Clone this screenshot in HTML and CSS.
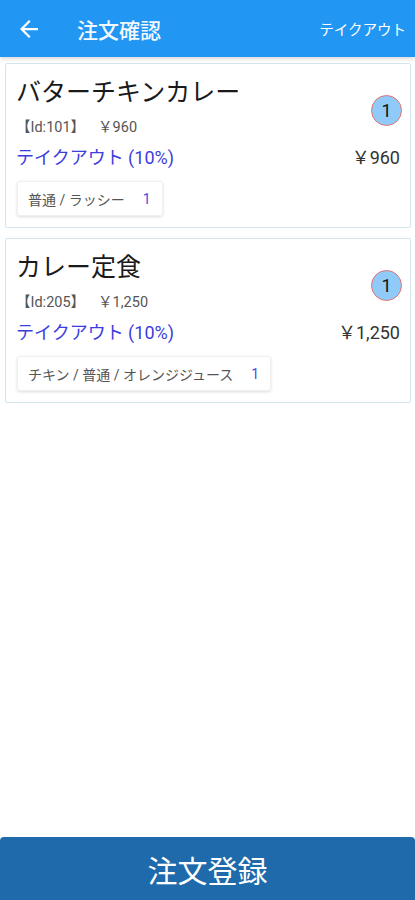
FILE: index.html
```html
<!DOCTYPE html>
<html lang="ja">
<head>
    <meta charset="UTF-8">
    <title>注文確認</title>
    <link rel="stylesheet" href="styles.css">
</head>
<body>
    <div id="app">
        <div class="header">
            <span class="back">
                <svg width="18" height="18" viewBox="4 4 16 16">
                    <path d="M20 11H7.83l5.59-5.59L12 4l-8 8 8 8 1.41-1.41L7.83 13H20v-2z" fill="#fff"/>
                </svg>
            </span>
            <span class="title">注文確認</span>
            <span class="mode">テイクアウト</span>
        </div>
        <div class="list">
            <div class="card">
                <div class="top">
                    <div class="info">
                        <div class="name">バターチキンカレー</div>
                        <div class="id">【Id:101】<span class="unit">￥960</span></div>
                    </div>
                    <span class="qty">1</span>
                </div>
                <div class="row">
                    <span class="tax">テイクアウト (10%)</span>
                    <span class="price">￥960</span>
                </div>
                <div class="chip">
                    <span class="opt">普通 / ラッシー</span>
                    <span class="num">1</span>
                </div>
            </div>
            <div class="card">
                <div class="top">
                    <div class="info">
                        <div class="name">カレー定食</div>
                        <div class="id">【Id:205】<span class="unit">￥1,250</span></div>
                    </div>
                    <span class="qty">1</span>
                </div>
                <div class="row">
                    <span class="tax">テイクアウト (10%)</span>
                    <span class="price">￥1,250</span>
                </div>
                <div class="chip">
                    <span class="opt">チキン / 普通 / オレンジジュース</span>
                    <span class="num">1</span>
                </div>
            </div>
        </div>
        <div class="submit">注文登録</div>
    </div>
</body>
</html>
```

FILE: styles.css
```css
*{
    margin: 0;
    padding: 0;
    box-sizing: border-box;
}
body{
    font-family: Roboto, "Noto Sans CJK JP", sans-serif;
    background: #fff;
    color: #222;
}
#app{
    width: 415px;
    height: 900px;
    display: flex;
    flex-direction: column;
}
.header{
    height: 57px;
    background: #2196f3;
    color: #fff;
    display: flex;
    align-items: center;
    padding: 0 9px 0 20px;
    box-shadow: 0 2px 4px rgba(0,0,0,.15);
}
.back{
    display: flex;
    width: 18px;
    margin-right: 39px;
}
.title{
    font-size: 21px;
    font-weight: 500;
    color: #f2f8ff;
}
.mode{
    margin-left: auto;
    font-size: 14.5px;
}
.list{
    flex: 1;
    padding: 6px 4px 0 5px;
    display: flex;
    flex-direction: column;
    gap: 10px;
}
.card{
    border: 1px solid #d3e5ee;
    border-radius: 2px;
    padding: 14px 9px 11px 10px;
}
.top{
    display: flex;
    align-items: center;
}
.info{
    flex: 1;
}
.name{
    font-size: 25px;
    line-height: 30px;
    color: #1a1a1a;
    margin-bottom: 10px;
}
.id{
    font-size: 14.5px;
    line-height: 20px;
    color: #555;
}
.unit{
    margin-left: 13px;
}
.qty{
    width: 31px;
    height: 31px;
    border-radius: 50%;
    background: #90caf9;
    border: 1.5px solid #e57373;
    display: flex;
    align-items: center;
    justify-content: center;
    font-size: 18px;
    color: #111;
    margin: 4px -1px 0 0;
}
.row{
    display: flex;
    justify-content: space-between;
    align-items: center;
    margin-top: 7px;
    line-height: 26px;
    font-size: 18px;
}
.tax{
    color: #3d3ddc;
}
.price{
    color: #333;
    margin-right: 1px;
}
.chip{
    display: inline-flex;
    align-items: center;
    height: 35px;
    margin: 10px 0 0 1px;
    padding: 0 11px 0 10px;
    border-radius: 3px;
    border: 1px solid #f0f0f0;
    box-shadow: 0 1px 3px rgba(0,0,0,.14);
    font-size: 14px;
}
.opt{
    color: #555;
}
.num{
    color: #4a4ae0;
    margin-left: 18px;
}
.submit{
    height: 63px;
    background: #1e6aab;
    border-radius: 4px 4px 0 0;
    color: #fff;
    font-size: 30px;
    display: flex;
    align-items: center;
    justify-content: center;
    font-family: "Noto Sans CJK JP", sans-serif;
}
```
